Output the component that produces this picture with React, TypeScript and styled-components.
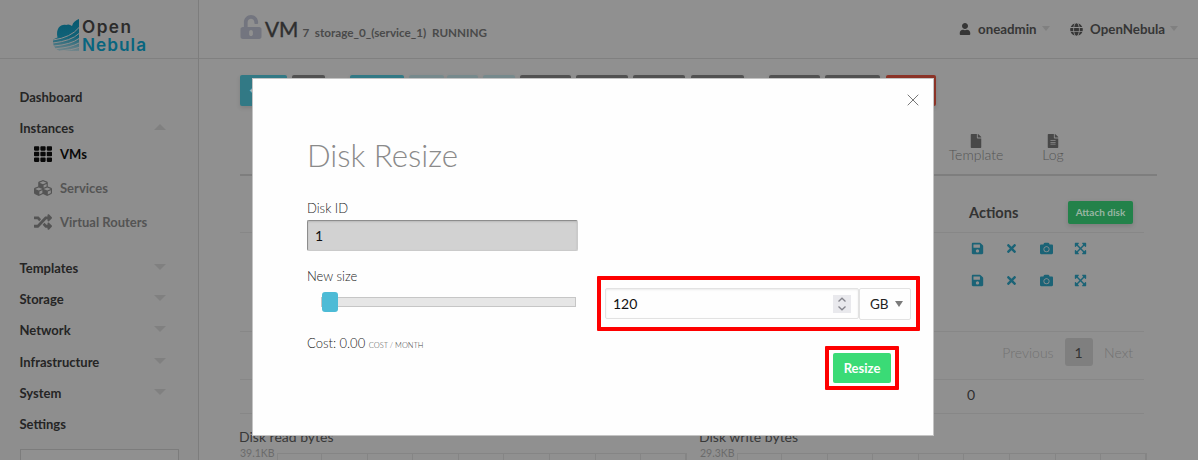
import React from "react";
import styled, { createGlobalStyle } from "styled-components";
import {
  FaUnlockAlt, FaTh, FaCubes, FaRandom, FaUser, FaGlobe, FaFile, FaFileAlt,
  FaSave, FaTimes, FaCamera, FaExpandArrowsAlt,
} from "react-icons/fa";

const Global = createGlobalStyle`
  * { box-sizing: border-box; }
  body { margin: 0; overflow: hidden; background: #909090; font-family: Lato, sans-serif; }
`;

const Page = styled.div`
  position: relative;
  width: 1198px;
  height: 460px;
  overflow: hidden;
  display: flex;
  background: #909090;
  color: #2f2f2f;
  font-size: 14px;
`;

const Sidebar = styled.aside`
  width: 199px;
  flex: none;
  background: #8e8e8e;
  border-right: 1px solid #7d7d7d;
`;

const Brand = styled.div`
  height: 59px;
  border-bottom: 1px solid #808080;
  padding: 19px 0 0 53px;
  svg { overflow: visible; }
`;

const Nav = styled.nav`
  padding: 28px 0 0 19.5px;
  display: flex;
  flex-direction: column;
`;

const NavItem = styled.div<{ $gap?: number }>`
  height: 20px;
  margin-bottom: ${(p) => p.$gap ?? 11}px;
  display: flex;
  align-items: center;
  justify-content: space-between;
  width: 145px;
  font-size: 13px;
  font-weight: 700;
  color: #252525;
`;

const SubItem = styled.div<{ $active?: boolean }>`
  height: 34px;
  padding-left: 14.5px;
  display: flex;
  align-items: center;
  gap: 8px;
  font-size: 13px;
  font-weight: 700;
  color: ${(p) => (p.$active ? "#090909" : "#545454")};
`;

const SubList = styled.div`
  margin: -12px 0 19px;
`;

const Caret = styled.span<{ $up?: boolean }>`
  border: 6px solid transparent;
  ${(p) => (p.$up ? "border-bottom-color: #808080; border-top: 0;" : "border-top-color: #808080; border-bottom: 0;")}
  margin-right: -1px;
  transform: translateY(-1px);
`;

const ZoneBox = styled.div`
  width: 159px;
  height: 36px;
  border: 1px solid #7c7c7c;
  background: #909090;
  margin-top: 4px;
`;

const Main = styled.main`
  flex: 1;
  min-width: 0;
`;

const Header = styled.header`
  height: 59px;
  border-bottom: 1px solid #808080;
  padding: 0 20px 0 40px;
  display: flex;
  justify-content: space-between;
`;

const Title = styled.div`
  display: flex;
  align-items: baseline;
  padding-top: 15px;
  svg { align-self: flex-start; color: #73757f; margin-right: 2px; }
`;

const TitleName = styled.span`
  font-size: 20.8px;
  line-height: 27px;
  -webkit-text-stroke: 0.4px #2f2f2f;
  color: #2f2f2f;
`;

const TitleInfo = styled.span`
  font-size: 11.7px;
  margin-left: 4px;
  color: #4a4a4a;
  font-weight: 700;
`;

const UserMenu = styled.div`
  display: flex;
  align-items: center;
  height: 58px;
  font-size: 13.3px;
  font-weight: 700;
  color: #363636;
  svg { margin-right: 7.5px; }
`;

const MenuEntry = styled.div<{ $left?: number }>`
  display: flex;
  align-items: center;
  margin-left: ${(p) => p.$left ?? 0}px;
  ${Caret} { margin: 0 0 0 5px; border-width: 5px 4.5px 0; }
`;

const Content = styled.div`
  width: 917px;
  margin-left: 41px;
  padding-top: 16px;
`;

const Toolbar = styled.div`
  display: flex;
  height: 31px;
`;

const ToolButton = styled.div<{ $w: number; $left?: number; $bg: string }>`
  width: ${(p) => p.$w}px;
  margin-left: ${(p) => p.$left ?? 5}px;
  background: ${(p) => p.$bg};
  border-radius: 2px;
  box-shadow: 0 2px 4px rgba(0, 0, 0, 0.12);
  color: #a4b4b8;
  font-size: 13px;
  line-height: 31px;
  padding-left: 9px;
`;

const Tabs = styled.div`
  height: 70px;
  border-bottom: 2px solid #7e7e7e;
  display: flex;
  padding: 28px 0 0 697.5px;
`;

const Tab = styled.div`
  width: 77px;
  display: flex;
  flex-direction: column;
  align-items: center;
  font-size: 14px;
  font-weight: 300;
  line-height: 14px;
  color: #555;
  svg { color: #484848; flex: none; }
`;

const TableRow = styled.div<{ $h: number; $line?: boolean; $top?: number; $bottom?: number }>`
  width: 904px;
  height: ${(p) => p.$h}px;
  border-bottom: ${(p) => (p.$line ? "1px solid #878787" : "0")};
  padding: ${(p) => p.$top ?? 0}px 0 ${(p) => p.$bottom ?? 0}px 729px;
  display: flex;
  align-items: center;
`;

const ColumnTitle = styled.div`
  width: 99px;
  font-size: 14.6px;
  font-weight: 700;
  color: #333;
`;

const AttachButton = styled.div`
  width: 65px;
  height: 23px;
  border-radius: 2px;
  background: #23824a;
  box-shadow: 0 2px 5px rgba(0, 0, 0, 0.14);
  color: #98b5a2;
  font-size: 10px;
  font-weight: 700;
  line-height: 23px;
  text-align: center;
`;

const ActionCell = styled.div`
  width: 34.3px;
  display: flex;
  justify-content: center;
  color: #1b6376;
`;

const ActionGroup = styled.div`
  display: flex;
  margin-left: -8.6px;
`;

const FooterCount = styled.span`
  margin-left: -2px;
`;

const Pager = styled.div`
  display: flex;
  width: 904px;
  height: 48px;
  border-bottom: 1px solid #878787;
  justify-content: flex-end;
  align-items: center;
  padding: 0 11px 7px 0;
  font-size: 14px;
  font-weight: 300;
  color: #727272;
`;

const PageNumber = styled.div`
  width: 28px;
  height: 28px;
  margin: 0 11.5px 0 11px;
  background: #7f7f7f;
  border-radius: 3px;
  color: #333;
  font-weight: 400;
  line-height: 29px;
  text-align: center;
`;

const Charts = styled.div`
  display: grid;
  grid-template-columns: 460px 457px;
  padding-top: 13px;
`;

const ChartTitle = styled.div`
  font-size: 14px;
  line-height: 20px;
  color: #383838;
  margin-left: -1px;
`;

const ChartBody = styled.div`
  display: flex;
  height: 20px;
  > svg { margin-top: 6px; }
`;

const AxisLabel = styled.div`
  width: 37px;
  font-size: 10.5px;
  line-height: 13px;
  color: #6b6b6b;
`;

const Modal = styled.section`
  position: absolute;
  left: 252px;
  top: 78px;
  width: 682px;
  height: 358px;
  background: #fefefe;
  border: 1px solid #c4c4c4;
  padding: 57px 22px 0 54px;
`;

const CloseIcon = styled.svg`
  position: absolute;
  right: 14.5px;
  top: 15px;
`;

const ModalTitle = styled.h1`
  margin: 0;
  font-size: 31.2px;
  font-weight: 300;
  line-height: 38px;
  color: #8a8a8a;
`;

const Label = styled.div<{ $top: number }>`
  margin-top: ${(p) => p.$top}px;
  height: 20px;
  line-height: 20px;
  font-size: 13px;
  font-weight: 300;
  color: #222;
`;

const DiskInput = styled.div`
  width: 271px;
  height: 31px;
  margin-top: 2px;
  border: 1px solid #cacaca;
  border-top: 1px solid #8d8d8d;
  border-left-color: #8d8d8d;
  border-radius: 2px;
  background: #d2d2d2;
  box-shadow: inset 0 1px 2px rgba(0, 0, 0, 0.12);
  padding-left: 7px;
  font-size: 14px;
  line-height: 30px;
  color: #111;
`;

const SizeRow = styled.div`
  display: flex;
  height: 34px;
  margin-top: 1px;
`;

const Slider = styled.div`
  width: 255px;
  height: 10px;
  margin: 10px 29px 0 14px;
  border: 1px solid #c6c6c6;
  background: #e6e6e6;
  display: flex;
  align-items: center;
`;

const Handle = styled.div`
  width: 16px;
  height: 20px;
  flex: none;
  border-radius: 3px;
  background: #4dbbd6;
`;

const NumberInput = styled.div`
  width: 254px;
  height: 31px;
  margin-top: 1px;
  border: 1px solid #e2e2e2;
  border-radius: 2px;
  box-shadow: inset 0 1px 2px rgba(0, 0, 0, 0.08);
  display: flex;
  align-items: center;
  justify-content: space-between;
  padding: 0 7px;
  font-size: 14px;
  color: #111;
`;

const Spinner = styled.div`
  width: 18px;
  height: 18px;
  background: #e9e9ed;
  display: flex;
  align-items: center;
  justify-content: center;
`;

const UnitSelect = styled.div`
  width: 52px;
  height: 32px;
  margin-top: 1px;
  border: 1px solid #e2e2e2;
  border-radius: 2px;
  display: flex;
  align-items: center;
  justify-content: space-between;
  padding: 0 7px 1px 10px;
  font-size: 13.5px;
  color: #222;
`;

const SelectArrow = styled.span`
  border: 4.5px solid transparent;
  border-top: 6px solid #7b7b7b;
  border-bottom: 0;
`;

const Cost = styled.div`
  margin-top: 12px;
  height: 20px;
  line-height: 20px;
  font-size: 13px;
  font-weight: 300;
  color: #222;
  white-space: nowrap;
  small { font-size: 7.5px; color: #444; }
`;

const ResizeButton = styled.div`
  width: 58px;
  height: 30px;
  margin: 0 20px 0 auto;
  border-radius: 2px;
  background: #3adb76;
  color: #fefefe;
  font-size: 13px;
  font-weight: 700;
  line-height: 30px;
  text-align: center;
`;

const Highlight = styled.div<{ $x: number; $y: number; $w: number; $h: number }>`
  position: absolute;
  left: ${(p) => p.$x}px;
  top: ${(p) => p.$y}px;
  width: ${(p) => p.$w}px;
  height: ${(p) => p.$h}px;
  border: 4px solid #fe0000;
  border-radius: 1px;
`;

function Logo() {
  return (
    <svg width="94" height="34" viewBox="0 0 94 34">
      <defs>
        <linearGradient id="cloud" x1="0" y1="0" x2="0" y2="1">
          <stop offset="0" stopColor="#07586f" />
          <stop offset="0.55" stopColor="#0f6278" />
          <stop offset="1" stopColor="#73868b" />
        </linearGradient>
      </defs>
      <path d="M26 0V32H7Q1 30 0 24V20.5Q2 19.5 4.5 18.5C2.5 9 8 5 13 6Q16 4.5 19 7C20 3 23 1 26 0Z" fill="url(#cloud)" />
      <g fill="none" stroke="#8e8e8e" strokeWidth="1">
        <path d="M0 21Q18 18.5 26 8.5" />
        <path d="M0 24Q18 22 26 14.5" />
        <path d="M1 27Q18 25.5 26 19.5" />
        <path d="M3 29.7Q18 28.5 26 24" />
        <path d="M7 32Q19 31 26 28.5" />
      </g>
      <text x="29" y="13.5" fontFamily="Inter, sans-serif" fontSize="17.2" fontWeight="600" textLength="49" fill="#2b2b2b">Open</text>
      <text x="29" y="31.5" fontFamily="Inter, sans-serif" fontSize="17.2" fontWeight="600" textLength="64" fill="#08657f">Nebula</text>
    </svg>
  );
}

function ChartGrid({ width, first }: { width: number; first: number }) {
  const lines = Array.from({ length: 8 }, (_, i) => first + i * 45.6);
  return (
    <svg width={width} height="20" shapeRendering="crispEdges">
      <path d={`M0 .5H${width}`} stroke="#858585" />
      <path d="M.5 0V20" stroke="#858585" />
      {lines.map((x) => <path key={x} d={`M${Math.round(x) + 0.5} 0V20`} stroke="#858585" />)}
      <path d={`M${width - 1} 0V20`} stroke="#858585" strokeWidth="2" />
    </svg>
  );
}

const teal = "#327985";
const pale = "#76898c";
const gray = "#515151";
const buttons: [number, number, string][] = [
  [47, 0, teal], [33, 5, gray], [54, 25, teal], [35, 5, pale], [31, 3, pale], [32, 5, pale],
  [51, 5, gray], [52, 5, gray], [52, 5, gray], [53, 6, gray], [51, 25, gray], [55, 5, gray], [50, 6, "#8b3327"],
];

function DiskActions() {
  return (
    <TableRow $h={32} $bottom={2}>
      <ActionGroup>
        <ActionCell><FaSave size={13} /></ActionCell>
        <ActionCell><FaTimes size={13} /></ActionCell>
        <ActionCell><FaCamera size={13} /></ActionCell>
        <ActionCell><FaExpandArrowsAlt size={13} /></ActionCell>
      </ActionGroup>
    </TableRow>
  );
}

export default function App() {
  return (
    <Page>
      <Global />
      <Sidebar>
        <Brand><Logo /></Brand>
        <Nav>
          <NavItem>Dashboard</NavItem>
          <NavItem>Instances<Caret $up /></NavItem>
          <SubList>
            <SubItem $active><FaTh size={18} />VMs</SubItem>
            <SubItem><FaCubes size={18} />Services</SubItem>
            <SubItem><FaRandom size={18} />Virtual Routers</SubItem>
          </SubList>
          <NavItem>Templates<Caret /></NavItem>
          <NavItem>Storage<Caret /></NavItem>
          <NavItem $gap={12}>Network<Caret /></NavItem>
          <NavItem>Infrastructure<Caret /></NavItem>
          <NavItem>System<Caret /></NavItem>
          <NavItem>Settings</NavItem>
          <ZoneBox />
        </Nav>
      </Sidebar>
      <Main>
        <Header>
          <Title>
            <FaUnlockAlt size={24} />
            <TitleName>VM</TitleName>
            <TitleInfo>7&nbsp; storage_0_(service_1)&nbsp; RUNNING</TitleInfo>
          </Title>
          <UserMenu>
            <MenuEntry><FaUser size={12} />oneadmin<Caret /></MenuEntry>
            <MenuEntry $left={20}><FaGlobe size={13} />OpenNebula<Caret /></MenuEntry>
          </UserMenu>
        </Header>
        <Content>
          <Toolbar>
            {buttons.map(([w, left, bg], i) => (
              <ToolButton key={i} $w={w} $left={left} $bg={bg}>{i === 0 ? "←" : null}</ToolButton>
            ))}
          </Toolbar>
          <Tabs>
            <Tab><FaFile size={14} />Template</Tab>
            <Tab><FaFileAlt size={14} />Log</Tab>
          </Tabs>
          <TableRow $h={57} $line $top={17}>
            <ColumnTitle>Actions</ColumnTitle>
            <AttachButton>Attach disk</AttachButton>
          </TableRow>
          <DiskActions />
          <DiskActions />
          <TableRow $h={35} $line />
          <Pager>
            Previous<PageNumber>1</PageNumber>Next
          </Pager>
          <TableRow $h={34} $line $bottom={4}><FooterCount>0</FooterCount></TableRow>
          <Charts>
            <div>
              <ChartTitle>Disk read bytes</ChartTitle>
              <ChartBody><AxisLabel>39.1KB</AxisLabel><ChartGrid width={410} first={44} /></ChartBody>
            </div>
            <div>
              <ChartTitle>Disk write bytes</ChartTitle>
              <ChartBody><AxisLabel>29.3KB</AxisLabel><ChartGrid width={410} first={44} /></ChartBody>
            </div>
          </Charts>
        </Content>
      </Main>
      <Modal>
        <CloseIcon width="12" height="12" viewBox="0 0 12 12" stroke="#777" strokeWidth="1">
          <path d="M.7 .7 11.3 11.3M11.3 .7 .7 11.3" />
        </CloseIcon>
        <ModalTitle>Disk Resize</ModalTitle>
        <Label $top={24}>Disk ID</Label>
        <DiskInput>1</DiskInput>
        <Label $top={15}>New size</Label>
        <SizeRow>
          <Slider><Handle /></Slider>
          <NumberInput>
            120
            <Spinner>
              <svg width="10" height="14" viewBox="0 0 10 14" fill="none" stroke="#85858d" strokeWidth="1.3">
                <path d="M1.5 4.5 5 1.2 8.5 4.5M1.5 9.5 5 12.8 8.5 9.5" />
              </svg>
            </Spinner>
          </NumberInput>
          <UnitSelect>GB<SelectArrow /></UnitSelect>
        </SizeRow>
        <Cost>Cost: 0.00 <small>COST / MONTH</small></Cost>
        <ResizeButton>Resize</ResizeButton>
        <Highlight $x={344} $y={197} $w={323} $h={55} />
        <Highlight $x={572} $y={267} $w={74} $h={44} />
      </Modal>
    </Page>
  );
}
